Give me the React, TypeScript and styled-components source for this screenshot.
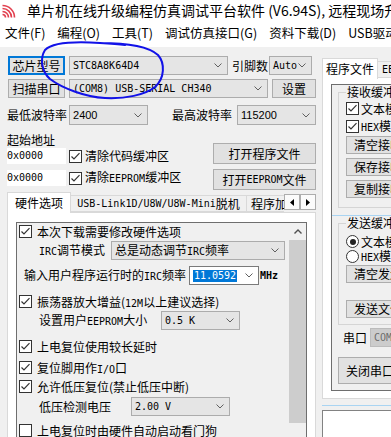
import React from "react";
import styled, { createGlobalStyle } from "styled-components";

const CJK = `"Noto Sans CJK SC", "Liberation Sans", sans-serif`;
const MONO = `"DejaVu Sans Mono", "Liberation Mono", "Noto Sans CJK SC", monospace`;
const SANS = `"Liberation Sans", "Noto Sans CJK SC", sans-serif`;

const GlobalStyle = createGlobalStyle`
  html, body { margin: 0; padding: 0; background: #f0f0f0; }
  body { font-family: ${CJK}; font-size: 12px; color: #000; }
  * { box-sizing: border-box; }
`;

const menus = ["文件(F)", "编程(O)", "工具(T)", "调试仿真接口(G)", "资料下载(D)", "USB驱动安装"];

const Window = styled.div`
  position: relative;
  width: 391px;
  height: 437px;
  overflow: hidden;
  background: #f0f0f0;
`;

const TitleBar = styled.div`
  height: 21px;
  display: flex;
  align-items: center;
  gap: 11px;
  padding-left: 2px;
  background: #fff;
  white-space: nowrap;
  overflow: hidden;
`;

const TitleIcon = styled.svg`
  flex: none;
`;

const TitleText = styled.span`
  flex: none;
  font-size: 14px;
  line-height: 21px;
`;

const MenuBar = styled.div`
  height: 26px;
  display: flex;
  align-items: center;
  gap: 12px;
  padding: 0 0 2px 5px;
  background: #fff;
  white-space: nowrap;
  font-size: 12.5px;
`;

const MenuItem = styled.span`
  flex: none;
  line-height: 16px;
`;

const Body = styled.div`
  display: flex;
  align-items: flex-start;
  padding: 9px 0 0 7px;
`;

const LeftCol = styled.div`
  flex: none;
  width: 309px;
  display: flex;
  flex-direction: column;
`;

const RightCol = styled.div`
  flex: none;
  width: 120px;
  margin-left: 6px;
  display: flex;
  flex-direction: column;
`;

const Row = styled.div<{ $h: number; $mt?: number }>`
  display: flex;
  align-items: center;
  height: ${(p) => p.$h}px;
  margin-top: ${(p) => p.$mt ?? 0}px;
`;

const Btn = styled.div<{ $w: number; $h?: number; $ml?: number; $mt?: number; $focus?: boolean }>`
  flex: none;
  width: ${(p) => p.$w}px;
  height: ${(p) => (p.$h ? `${p.$h}px` : "100%")};
  margin: ${(p) => p.$mt ?? 0}px 0 0 ${(p) => p.$ml ?? 0}px;
  display: flex;
  align-items: center;
  justify-content: center;
  background: #e1e1e1;
  border: 1px solid ${(p) => (p.$focus ? "#0078d7" : "#adadad")};
  box-shadow: ${(p) => (p.$focus ? "inset 0 0 0 1px #0078d7" : "none")};
  white-space: nowrap;
  overflow: hidden;
  line-height: 14px;
`;

const LeftBtn = styled(Btn)`
  justify-content: flex-start;
  padding-left: 7px;
`;

const comboBg = { gray: "#e5e5e5", white: "#fff", off: "#cccccc" };
const comboBorder = { gray: "#acacac", white: "#7a7a7a", off: "#bcbcbc" };

const Combo = styled.div<{ $w: number; $ml?: number; $tone?: "gray" | "white" | "off" }>`
  flex: none;
  width: ${(p) => p.$w}px;
  height: 100%;
  margin-left: ${(p) => p.$ml ?? 0}px;
  display: flex;
  align-items: center;
  justify-content: space-between;
  padding: 0 5px 0 3px;
  background: ${(p) => comboBg[p.$tone ?? "gray"]};
  border: 1px solid ${(p) => comboBorder[p.$tone ?? "gray"]};
  color: ${(p) => (p.$tone === "off" ? "#6d6d6d" : "#000")};
  white-space: nowrap;
  overflow: hidden;
`;

const Val = styled.span<{ $f?: "mono" | "sans" | "cjk" }>`
  white-space: nowrap;
  font-family: ${(p) => (p.$f === "mono" ? MONO : p.$f === "sans" ? SANS : CJK)};
  font-size: ${(p) => (p.$f === "mono" ? "10px" : p.$f === "sans" ? "11px" : "12px")};
  line-height: 14px;
`;

const Lat = styled.span`
  font-family: ${MONO};
  font-size: 10px;
`;

const Label = styled.span<{ $ml?: number; $w?: number }>`
  flex: none;
  margin-left: ${(p) => p.$ml ?? 0}px;
  width: ${(p) => (p.$w ? `${p.$w}px` : "auto")};
  white-space: nowrap;
  line-height: 16px;
`;

const AddrSection = styled.div`
  display: flex;
  align-items: flex-start;
`;

const AddrFields = styled.div`
  display: flex;
  flex-direction: column;
`;

const Caption = styled.div`
  margin-top: 7px;
  line-height: 16px;
`;

const AddrInput = styled.div`
  flex: none;
  width: 59px;
  height: 16px;
  display: flex;
  align-items: center;
  background: #fff;
  font-family: ${MONO};
  font-size: 10px;
`;

const CheckRow = styled.div<{ $h: number; $mt?: number; $gap?: number }>`
  display: flex;
  align-items: center;
  gap: ${(p) => p.$gap ?? 3}px;
  height: ${(p) => p.$h}px;
  margin-top: ${(p) => p.$mt ?? 0}px;
  white-space: nowrap;
  line-height: 14px;
`;

const AddrButtons = styled.div`
  margin: 18px 0 0 auto;
  display: flex;
  flex-direction: column;
`;

const Box = styled.span`
  flex: none;
  width: 13px;
  height: 13px;
  display: flex;
  align-items: center;
  justify-content: center;
  background: #fff;
  border: 1px solid #333;
`;

const RadioRing = styled.span`
  flex: none;
  width: 13px;
  height: 13px;
  display: flex;
  align-items: center;
  justify-content: center;
  background: #fff;
  border: 1px solid #333;
  border-radius: 50%;
`;

const RadioDot = styled.span`
  width: 6px;
  height: 6px;
  border-radius: 50%;
  background: #222;
`;

const TabStrip = styled.div`
  position: relative;
  z-index: 1;
  display: flex;
  height: 21px;
  margin: 2px 0 -1px 0;
`;

const TabList = styled.div`
  display: flex;
  align-items: flex-start;
  width: 277px;
  overflow: hidden;
`;

const Tab = styled.div<{ $active?: boolean; $w?: number }>`
  flex: none;
  width: ${(p) => (p.$w ? `${p.$w}px` : "auto")};
  height: ${(p) => (p.$active ? 21 : 17)}px;
  margin: ${(p) => (p.$active ? 0 : 3)}px -1px 0 0;
  padding: 0 4px;
  display: flex;
  align-items: center;
  justify-content: ${(p) => (p.$w ? "center" : "flex-start")};
  background: ${(p) => (p.$active ? "#fff" : "#f0f0f0")};
  border: 1px solid #d9d9d9;
  border-bottom: ${(p) => (p.$active ? "none" : "1px solid #d9d9d9")};
  white-space: nowrap;
  line-height: 14px;
`;

const ScrollArrows = styled.div`
  display: flex;
  margin-top: 2px;
`;

const ArrowBtn = styled.div`
  width: 16px;
  height: 16px;
  display: flex;
  align-items: center;
  justify-content: center;
  background: #fbfbfb;
  border: 1px solid #adadad;
`;

const TabPage = styled.div`
  height: 240px;
  padding: 9px 0 0 8px;
  background: #fff;
  border: 1px solid #d9d9d9;
`;

const InnerBox = styled.div`
  width: 291px;
  height: 240px;
  display: flex;
  background: #f0f0f0;
  border: 1px solid #6e6e6e;
`;

const OptList = styled.div`
  flex: 1;
  display: flex;
  flex-direction: column;
  padding-left: 2px;
`;

const OptRow = styled.div<{ $h: number; $mt?: number; $pl?: number }>`
  display: flex;
  align-items: center;
  gap: 5px;
  height: ${(p) => p.$h}px;
  margin-top: ${(p) => p.$mt ?? 0}px;
  padding-left: ${(p) => p.$pl ?? 0}px;
  white-space: nowrap;
`;

const FieldRow = styled(OptRow)`
  gap: 0;
`;

const ScrollBar = styled.div`
  flex: none;
  width: 17px;
  display: flex;
  flex-direction: column;
`;

const ScrollUp = styled.div`
  height: 17px;
  display: flex;
  align-items: center;
  justify-content: center;
`;

const Thumb = styled.div`
  height: 183px;
  background: #cdcdcd;
`;

const Highlight = styled.span`
  padding: 0 1px;
  background: #0078d7;
  color: #fff;
  font-family: ${MONO};
  font-size: 10px;
  line-height: 12px;
`;

const Unit = styled.span`
  margin-left: 1px;
  font-family: ${MONO};
  font-size: 10px;
  font-weight: bold;
`;

const RTabStrip = styled.div`
  position: relative;
  z-index: 1;
  display: flex;
  align-items: flex-start;
  height: 19px;
  margin: 2px 0 -1px 0;
`;

const RPage = styled.div`
  height: 323px;
  padding: 7px 0 0 8px;
  background: #fff;
  border: 1px solid #d9d9d9;
`;

const Panel = styled.div`
  height: 307px;
  padding-left: 6px;
  display: flex;
  flex-direction: column;
  background: #f0f0f0;
  border: 1px solid #6e6e6e;
  border-right: none;
`;

const Group = styled.fieldset<{ $pb: number }>`
  margin: 1px 0 0 0;
  padding: 0 0 ${(p) => p.$pb}px 7px;
  min-width: 0;
  border: 1px solid #d5d5d5;
  border-right: none;
`;

const Legend = styled.legend`
  padding: 0 1px;
  line-height: 12px;
  white-space: nowrap;
`;

const Splitter = styled.div`
  height: 1px;
  margin: 7px 0 0 -6px;
  background: #a9d4f2;
`;

const PortRow = styled.div`
  display: flex;
  align-items: center;
  height: 19px;
  margin-top: 3px;
  padding-left: 5px;
`;

const BlueLine = styled.div`
  height: 1px;
  margin-top: 6px;
  background: #a9d4f2;
`;

const LogBox = styled.div`
  height: 40px;
  margin-top: 4px;
  background: #fff;
  border: 1px solid #828282;
`;

const Overlay = styled.svg`
  position: absolute;
  left: 0;
  top: 0;
  pointer-events: none;
`;

const Chevron = ({ up }: { up?: boolean }) => (
  <svg width="8" height="5" viewBox="0 0 8 5">
    <polyline
      points={up ? "0.5,4.5 4,1 7.5,4.5" : "0.5,0.5 4,4 7.5,0.5"}
      fill="none"
      stroke={up ? "#505050" : "#606060"}
      strokeWidth={up ? 1.4 : 1}
    />
  </svg>
);

const Tri = ({ dir }: { dir: "l" | "r" }) => (
  <svg width="4" height="7" viewBox="0 0 4 7">
    <polygon points={dir === "l" ? "4,0 0,3.5 4,7" : "0,0 4,3.5 0,7"} fill="#000" />
  </svg>
);

const CheckBox = ({ checked }: { checked?: boolean }) => (
  <Box>
    {checked && (
      <svg width="11" height="11" viewBox="0 0 11 11">
        <polyline points="1.5,5.5 4,8 9.5,2.2" fill="none" stroke="#333" strokeWidth="1.2" />
      </svg>
    )}
  </Box>
);

const Radio = ({ on }: { on?: boolean }) => <RadioRing>{on && <RadioDot />}</RadioRing>;

const AppIcon = () => (
  <TitleIcon width="14" height="14" viewBox="0 0 14 14">
    {[3, 6, 9, 12].map((r) => (
      <path
        key={r}
        d={`M0.5 ${13.5 - r} A${r} ${r} 0 0 1 ${0.5 + r} 13.5`}
        fill="none"
        stroke="#e2404f"
        strokeWidth="1.6"
      />
    ))}
  </TitleIcon>
);

const Annotation = () => (
  <Overlay width="391" height="437" viewBox="0 0 391 437">
    <path
      d="M100 43 C125 43 148 46 158 55 C165 63 165 78 155 87 C145 95 125 99 105 98 C85 97 62 88 50 79 C41 71 40 58 45 50 C52 43 70 41 100 43 C110 43.5 118 44 125 45"
      fill="none"
      stroke="#1212e8"
      strokeWidth="2"
      strokeLinecap="round"
    />
  </Overlay>
);

export default function App() {
  return (
    <>
      <GlobalStyle />
      <Window>
        <TitleBar>
          <AppIcon />
          <TitleText>单片机在线升级编程仿真调试平台软件 (V6.94S), 远程现场升级</TitleText>
        </TitleBar>
        <MenuBar>
          {menus.map((m) => (
            <MenuItem key={m}>{m}</MenuItem>
          ))}
        </MenuBar>
        <Body>
          <LeftCol>
            <Row $h={19}>
              <Btn $w={57} $ml={1} $focus>芯片型号</Btn>
              <Combo $w={159} $ml={4}>
                <Val $f="mono">STC8A8K64D4</Val>
                <Chevron />
              </Combo>
              <Label $ml={4}>引脚数</Label>
              <Combo $w={43} $ml={1}>
                <Val $f="mono">Auto</Val>
                <Chevron />
              </Combo>
            </Row>
            <Row $h={19} $mt={4}>
              <Btn $w={57} $ml={1}>扫描串口</Btn>
              <Combo $w={199} $ml={4}>
                <Val $f="mono">(COM8) USB-SERIAL CH340</Val>
                <Chevron />
              </Combo>
              <Btn $w={44} $ml={4}>设置</Btn>
            </Row>
            <Row $h={20} $mt={7}>
              <Label>最低波特率</Label>
              <Combo $w={79} $ml={2}>
                <Val $f="sans">2400</Val>
                <Chevron />
              </Combo>
              <Label $ml={24}>最高波特率</Label>
              <Combo $w={79} $ml={5}>
                <Val $f="sans">115200</Val>
                <Chevron />
              </Combo>
            </Row>
            <AddrSection>
              <AddrFields>
                <Caption>起始地址</Caption>
                <CheckRow $h={16}>
                  <AddrInput>0x0000</AddrInput>
                  <CheckBox checked />
                  <span>清除代码缓冲区</span>
                </CheckRow>
                <CheckRow $h={16} $mt={6}>
                  <AddrInput>0x0000</AddrInput>
                  <CheckBox checked />
                  <span>
                    清除<Lat>EEPROM</Lat>缓冲区
                  </span>
                </CheckRow>
              </AddrFields>
              <AddrButtons>
                <Btn $w={103} $h={21}>打开程序文件</Btn>
                <Btn $w={103} $h={21} $mt={5}>
                  打开<Lat>EEPROM</Lat>文件
                </Btn>
              </AddrButtons>
            </AddrSection>
            <TabStrip>
              <TabList>
                <Tab $active $w={64}>硬件选项</Tab>
                <Tab $w={177}>
                  <Lat>USB-Link1D/U8W/U8W-Mini</Lat>脱机
                </Tab>
                <Tab>程序加密后传输</Tab>
              </TabList>
              <ScrollArrows>
                <ArrowBtn>
                  <Tri dir="l" />
                </ArrowBtn>
                <ArrowBtn>
                  <Tri dir="r" />
                </ArrowBtn>
              </ScrollArrows>
            </TabStrip>
            <TabPage>
              <InnerBox>
                <OptList>
                  <OptRow $h={16}>
                    <CheckBox checked />
                    <span>本次下载需要修改硬件选项</span>
                  </OptRow>
                  <FieldRow $h={19} $mt={2} $pl={20}>
                    <Label $w={72}>
                      <Lat>IRC</Lat>调节模式
                    </Label>
                    <Combo $w={174}>
                      <Val>
                        总是动态调节<Lat>IRC</Lat>频率
                      </Val>
                      <Chevron />
                    </Combo>
                  </FieldRow>
                  <FieldRow $h={19} $mt={6} $pl={5}>
                    <Label $w={165}>
                      输入用户程序运行时的<Lat>IRC</Lat>频率
                    </Label>
                    <Combo $w={70} $tone="white">
                      <Highlight>11.0592</Highlight>
                      <Chevron />
                    </Combo>
                    <Unit>MHz</Unit>
                  </FieldRow>
                  <OptRow $h={16} $mt={8}>
                    <CheckBox checked />
                    <span>
                      振荡器放大增益(<Lat>12M</Lat>以上建议选择)
                    </span>
                  </OptRow>
                  <FieldRow $h={19} $mt={2} $pl={20}>
                    <Label $w={122}>
                      设置用户<Lat>EEPROM</Lat>大小
                    </Label>
                    <Combo $w={79}>
                      <Val $f="mono">0.5 K</Val>
                      <Chevron />
                    </Combo>
                  </FieldRow>
                  <OptRow $h={16} $mt={8}>
                    <CheckBox checked />
                    <span>上电复位使用较长延时</span>
                  </OptRow>
                  <OptRow $h={16} $mt={5}>
                    <CheckBox checked />
                    <span>
                      复位脚用作<Lat>I/O</Lat>口
                    </span>
                  </OptRow>
                  <OptRow $h={16} $mt={3}>
                    <CheckBox checked />
                    <span>允许低压复位(禁止低压中断)</span>
                  </OptRow>
                  <FieldRow $h={19} $mt={3} $pl={20}>
                    <Label $w={92}>低压检测电压</Label>
                    <Combo $w={99}>
                      <Val $f="mono">2.00 V</Val>
                      <Chevron />
                    </Combo>
                  </FieldRow>
                  <OptRow $h={16} $mt={6}>
                    <CheckBox />
                    <span>上电复位时由硬件自动启动看门狗</span>
                  </OptRow>
                </OptList>
                <ScrollBar>
                  <ScrollUp>
                    <Chevron up />
                  </ScrollUp>
                  <Thumb />
                </ScrollBar>
              </InnerBox>
            </TabPage>
          </LeftCol>
          <RightCol>
            <RTabStrip>
              <Tab $active $w={56}>程序文件</Tab>
              <Tab>
                <Lat>EEPROM</Lat>文件
              </Tab>
            </RTabStrip>
            <RPage>
              <Panel>
                <Group $pb={9}>
                  <Legend>接收缓冲区</Legend>
                  <CheckRow $h={15} $mt={3} $gap={2}>
                    <CheckBox checked />
                    <span>文本模式</span>
                  </CheckRow>
                  <CheckRow $h={15} $mt={3} $gap={2}>
                    <CheckBox checked />
                    <span>
                      <Lat>HEX</Lat>模式
                    </span>
                  </CheckRow>
                  <LeftBtn $w={75} $h={18} $mt={2}>清空接收区</LeftBtn>
                  <LeftBtn $w={75} $h={18} $mt={4}>保存接收数据</LeftBtn>
                  <LeftBtn $w={75} $h={18} $mt={4}>复制接收数据</LeftBtn>
                </Group>
                <Splitter />
                <Group $pb={6}>
                  <Legend>发送缓冲区</Legend>
                  <CheckRow $h={15} $mt={5} $gap={2}>
                    <Radio on />
                    <span>文本模式</span>
                  </CheckRow>
                  <CheckRow $h={15} $gap={2}>
                    <Radio />
                    <span>
                      <Lat>HEX</Lat>模式
                    </span>
                  </CheckRow>
                  <LeftBtn $w={75} $h={18} $mt={1}>清空发送区</LeftBtn>
                  <LeftBtn $w={75} $h={18} $mt={17}>发送文件</LeftBtn>
                </Group>
                <PortRow>
                  <Label $w={24}>串口</Label>
                  <Combo $w={60} $ml={3} $tone="off">
                    <Val $f="mono">COM8</Val>
                  </Combo>
                </PortRow>
                <LeftBtn $w={70} $h={27} $mt={10}>关闭串口</LeftBtn>
              </Panel>
            </RPage>
            <BlueLine />
            <LogBox />
          </RightCol>
        </Body>
        <Annotation />
      </Window>
    </>
  );
}
